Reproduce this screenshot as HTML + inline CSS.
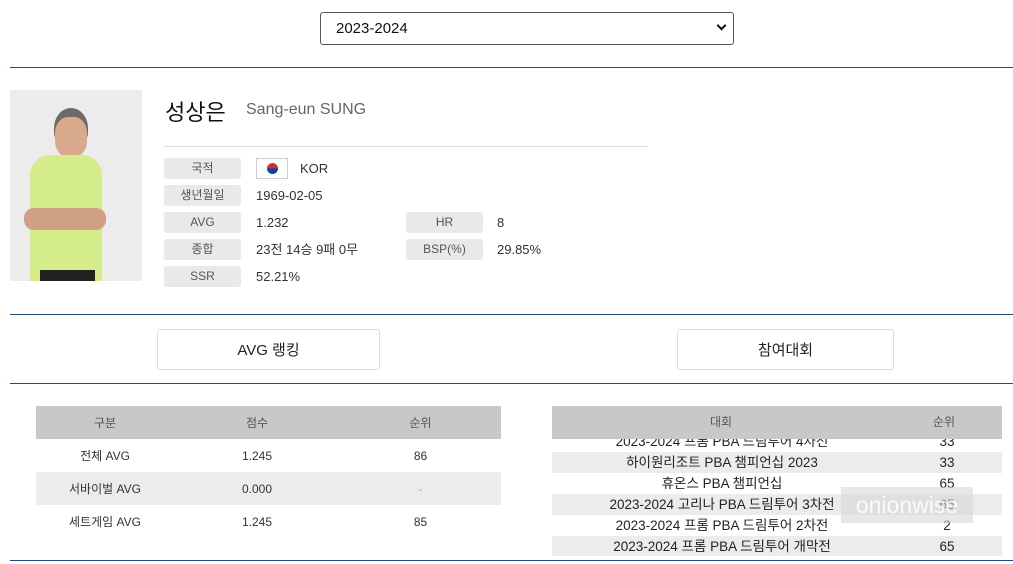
<!DOCTYPE html>
<html><head><meta charset="utf-8"><style>
*{margin:0;padding:0;box-sizing:border-box}
body{width:1013px;height:564px;background:#fff;font-family:"Liberation Sans","Noto Sans CJK KR",sans-serif;color:#333;position:relative;overflow:hidden;font-size:13px}
.a{position:absolute}
.line{position:absolute;left:10px;right:0;height:1px;background:#1f4e79}
.sel{left:320px;top:12px;width:414px;height:33px;border:1px solid #555;border-radius:3px;font-size:15px;color:#111;padding:7px 15px}
.lab{position:absolute;width:77px;height:21px;background:#e9e9e9;border-radius:3px;text-align:center;line-height:21px;font-size:12px;color:#555}
.val{position:absolute;font-size:13px;line-height:21px;color:#333}
.btn{position:absolute;top:329px;height:41px;border:1px solid #ddd;border-radius:3px;text-align:center;line-height:41px;font-size:15px;color:#222}
table{border-collapse:collapse;position:absolute;text-align:center;table-layout:fixed}
.t1{left:36px;top:406px;width:465px;font-size:12px}
.t1 th{background:#c8c8c8;height:33px;font-weight:normal;color:#555}
.t1 td{height:33px}
.g{background:#ececec}
.t2{left:552px;width:450px;font-size:13.5px;color:#222}
.t2 td{height:21px;line-height:21px}
</style></head><body>
<div class="a sel">2023-2024<span style="position:absolute;right:8px;top:9px;width:7px;height:7px;border-right:2px solid #111;border-bottom:2px solid #111;transform:rotate(45deg)"></span></div>
<div class="line" style="top:67px"></div>
<div class="a" style="left:10px;top:90px;width:132px;height:191px;background:#ececec;overflow:hidden">
 <div class="a" style="left:44px;top:18px;width:34px;height:40px;background:#6b6b6b;border-radius:50% 50% 40% 40%"></div>
 <div class="a" style="left:45px;top:27px;width:32px;height:40px;background:#d9a98c;border-radius:40%"></div>
 <div class="a" style="left:20px;top:65px;width:72px;height:126px;background:#d4ec8a;border-radius:20px 20px 0 0"></div>
 <div class="a" style="left:14px;top:118px;width:82px;height:22px;background:#d0a084;border-radius:10px"></div>
 <div class="a" style="left:30px;top:180px;width:55px;height:11px;background:#222"></div>
</div>
<div class="a" style="left:165px;top:95px;font-size:22px;color:#111">성상은</div>
<div class="a" style="left:246px;top:101px;font-size:16px;color:#666">Sang-eun SUNG</div>
<div class="a" style="left:164px;top:146px;width:484px;height:1px;background:#ddd"></div>
<div class="lab" style="left:164px;top:158px">국적</div>
<div class="a" style="left:256px;top:158px;width:32px;height:21px;border:1px solid #ccc;background:#fff"><div class="a" style="left:10px;top:4px;width:11px;height:11px;border-radius:50%;background:linear-gradient(#cd2e3a 50%,#0047a0 50%)"></div></div>
<div class="val" style="left:300px;top:158px">KOR</div>
<div class="lab" style="left:164px;top:185px">생년월일</div><div class="val" style="left:256px;top:185px">1969-02-05</div>
<div class="lab" style="left:164px;top:212px">AVG</div><div class="val" style="left:256px;top:212px">1.232</div>
<div class="lab" style="left:406px;top:212px">HR</div><div class="val" style="left:497px;top:212px">8</div>
<div class="lab" style="left:164px;top:239px">종합</div><div class="val" style="left:256px;top:239px">23전 14승 9패 0무</div>
<div class="lab" style="left:406px;top:239px">BSP(%)</div><div class="val" style="left:497px;top:239px">29.85%</div>
<div class="lab" style="left:164px;top:266px">SSR</div><div class="val" style="left:256px;top:266px">52.21%</div>
<div class="line" style="top:314px"></div>
<div class="btn" style="left:157px;width:223px">AVG 랭킹</div>
<div class="btn" style="left:677px;width:217px">참여대회</div>
<div class="line" style="top:383px"></div>
<table class="t1"><colgroup><col style="width:138px"><col style="width:166px"><col style="width:161px"></colgroup><tr><th>구분</th><th>점수</th><th>순위</th></tr>
<tr><td>전체 AVG</td><td>1.245</td><td>86</td></tr>
<tr class="g"><td>서바이벌 AVG</td><td>0.000</td><td style="color:#aaa">-</td></tr>
<tr><td>세트게임 AVG</td><td>1.245</td><td>85</td></tr></table>
<div class="a" style="left:552px;top:406px;width:450px;height:150px;overflow:hidden">
<table class="t2" style="left:0;top:25px;width:450px"><colgroup><col style="width:340px"><col></colgroup>
<tr><td>2023-2024 프롬 PBA 드림투어 4차전</td><td>33</td></tr>
<tr class="g"><td>하이원리조트 PBA 챔피언십 2023</td><td>33</td></tr>
<tr><td>휴온스 PBA 챔피언십</td><td>65</td></tr>
<tr class="g"><td>2023-2024 고리나 PBA 드림투어 3차전</td><td>65</td></tr>
<tr><td>2023-2024 프롬 PBA 드림투어 2차전</td><td>2</td></tr>
<tr class="g"><td>2023-2024 프롬 PBA 드림투어 개막전</td><td>65</td></tr></table>
<div class="a" style="left:0;top:0;width:450px;height:33px;background:#c8c8c8;font-size:12px;color:#555;line-height:33px"><span class="a" style="left:158px">대회</span><span class="a" style="left:381px">순위</span></div>
</div>
<div class="a" style="left:841px;top:487px;width:132px;height:36px;background:rgba(215,215,215,.6);color:rgba(255,255,255,.85);font-size:23px;line-height:36px;text-align:center">onionwise</div>
<div class="line" style="top:560px"></div>
</body></html>
